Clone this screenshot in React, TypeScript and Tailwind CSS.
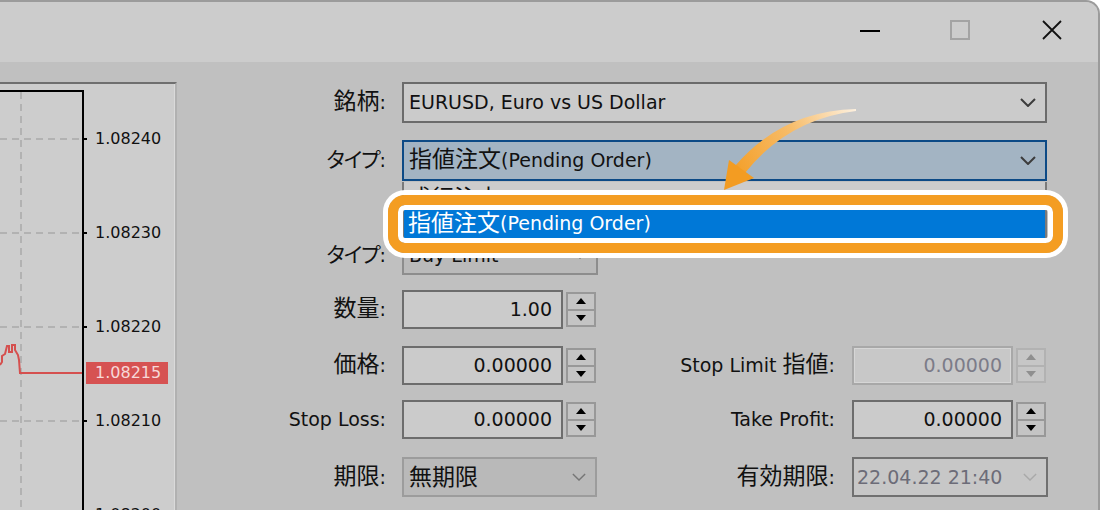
import type { ReactNode } from "react";

// Japanese glyphs are drawn a little larger than the Latin text, as in the terminal UI
function J({ children }: { children: ReactNode }) {
  return <span className="text-[23px] leading-none">{children}</span>;
}

// katakana labels use proportional widths
function K({ children }: { children: ReactNode }) {
  return <span className="text-[21px] leading-none tracking-[-1px] [font-feature-settings:'palt']">{children}</span>;
}

function Chevron({ dim = false, small = false }: { dim?: boolean; small?: boolean }) {
  return (
    <svg width={small ? 14 : 16} height={small ? 8 : 9} viewBox="0 0 16 9" className="shrink-0">
      <path
        d="M1 1 L8 8 L15 1"
        fill="none"
        stroke={dim ? "#a9a9a9" : small ? "#767676" : "#3c3c3c"}
        strokeWidth={small ? 1.6 : 2}
      />
    </svg>
  );
}

function Spin({ disabled = false }: { disabled?: boolean }) {
  const tri = disabled ? "border-b-[#8f8f8f]" : "border-b-black";
  const triDown = disabled ? "border-t-[#8f8f8f]" : "border-t-black";
  return (
    <div
      className={
        disabled
          ? "ml-[3px] flex h-[35px] w-[30px] shrink-0 flex-col border-2 border-[#b2b2b2] bg-[#c6c6c6]"
          : "ml-[3px] flex h-[35px] w-[30px] shrink-0 flex-col border-2 border-[#989898] bg-[#c4c4c4]"
      }
    >
      <div
        className={
          disabled
            ? "flex flex-1 items-center justify-center border-b-2 border-[#b2b2b2]"
            : "flex flex-1 items-center justify-center border-b-2 border-[#989898]"
        }
      >
        <div className={`h-0 w-0 border-x-[5px] border-b-[6px] border-x-transparent ${tri}`} />
      </div>
      <div className="flex flex-1 items-center justify-center">
        <div className={`h-0 w-0 border-x-[5px] border-t-[6px] border-x-transparent ${triDown}`} />
      </div>
    </div>
  );
}

function NumField({ value, disabled = false }: { value: string; disabled?: boolean }) {
  return (
    <div
      className={
        disabled
          ? "flex h-[39px] w-[161px] shrink-0 items-center justify-end border-2 border-[#a8a8a8] bg-[#c8c8c8] pr-[9px] text-[#7c7c88] shadow-[inset_0_0_0_1px_#d6d6d6]"
          : "flex h-[39px] w-[161px] shrink-0 items-center justify-end border-2 border-[#6d6d6d] bg-[#cbcbcb] pr-[9px]"
      }
    >
      {value}
    </div>
  );
}

const gridRows = [55, 149, 243, 337, 431];
const prices = ["1.08240", "1.08230", "1.08220", "1.08210", "1.08200"];

function Chart() {
  return (
    <div className="relative w-[177px] shrink-0 overflow-hidden border-r-2 border-t-2 border-r-[#b1b1b1] border-t-[#6f6f6f] bg-[#cdcdcd] shadow-[inset_-1px_0_0_#dadada]">
      <svg width="175" height="430" className="absolute left-0 top-0">
        <line x1="21" y1="8" x2="21" y2="430" stroke="#b2b2b2" strokeWidth="2" strokeDasharray="7 5" />
        {gridRows.map((y) => (
          <g key={y}>
            <line x1="0" y1={y} x2="82" y2={y} stroke="#b2b2b2" strokeWidth="2" strokeDasharray="7 5" />
            <line x1="84" y1={y} x2="87" y2={y} stroke="#000" strokeWidth="2" />
          </g>
        ))}
        <line x1="0" y1="7" x2="84" y2="7" stroke="#000" strokeWidth="2" />
        <line x1="83" y1="6" x2="83" y2="430" stroke="#000" strokeWidth="2" />
        <path
          d="M0 281 L2 278 L2 272 L5 270 L7 262 L9 262 L9 268 L12 268 L12 261 L15 261 L15 266 L18 271 L19 276 L20 289 L82 289"
          fill="none"
          stroke="#d5504f"
          strokeWidth="2"
        />
      </svg>
      {prices.map((p, i) => (
        <div
          key={p}
          className="absolute left-[95px] h-[20px] text-[16px] leading-[20px] text-[#111]"
          style={{ top: gridRows[i] - 10 }}
        >
          {p}
        </div>
      ))}
      <div className="absolute left-[86px] top-[278px] flex h-[22px] w-[82px] items-center bg-[#d65252] pl-[9px] text-[16px] text-[#f6d8d8]">
        1.08215
      </div>
    </div>
  );
}

function TitleBar() {
  return (
    <div className="flex h-[60px] shrink-0 items-start bg-[#cccccc] pr-[36px]">
      <div className="ml-auto mt-[28px] h-[2px] w-[20px] bg-black" />
      <div className="ml-[70px] mt-[18px] h-[20px] w-[20px] border-2 border-[#a3a3a3]" />
      <svg width="20" height="20" viewBox="0 0 20 20" className="ml-[72px] mt-[18px]">
        <path d="M1 1 L19 19 M19 1 L1 19" stroke="#111" strokeWidth="1.8" />
      </svg>
    </div>
  );
}

function Form() {
  return (
    <div className="flex flex-col">
      <div className="flex h-[41px] items-center">
        <div className="w-[209px] text-right">
          <J>銘柄</J>:
        </div>
        <div className="ml-[16px] flex h-[41px] w-[645px] items-center justify-between border-2 border-[#6b6b6b] bg-[#cbcbcb] pl-[5px] pr-[9px]">
          EURUSD, Euro vs US Dollar
          <Chevron />
        </div>
      </div>

      <div className="mt-[17px] flex h-[41px] items-center">
        <div className="w-[209px] text-right">
          <K>タイプ</K>:
        </div>
        <div className="ml-[16px] flex h-[41px] w-[645px] items-center justify-between border-2 border-[#0c4a86] bg-[#a3b4c3] pl-[5px] pr-[9px]">
          <span>
            <J>指値注文</J>(Pending Order)
          </span>
          <Chevron />
        </div>
      </div>

      <div className="mt-[54px] flex h-[40px] items-center">
        <div className="w-[209px] text-right">
          <K>タイプ</K>:
        </div>
        <div className="ml-[16px] flex h-[40px] w-[196px] items-center justify-between border-2 border-[#8d8d8d] bg-[#bababa] pl-[5px] pr-[9px]">
          Buy Limit
          <Chevron small />
        </div>
      </div>

      <div className="mt-[15px] flex h-[39px] items-center">
        <div className="w-[209px] text-right">
          <J>数量</J>:
        </div>
        <div className="ml-[16px] flex items-center">
          <NumField value="1.00" />
          <Spin />
        </div>
      </div>

      <div className="mt-[17px] flex h-[39px] items-center">
        <div className="w-[209px] text-right">
          <J>価格</J>:
        </div>
        <div className="ml-[16px] flex items-center">
          <NumField value="0.00000" />
          <Spin />
        </div>
        <div className="w-[239px] text-right">
          Stop Limit <J>指値</J>:
        </div>
        <div className="ml-[17px] flex items-center">
          <NumField value="0.00000" disabled />
          <Spin disabled />
        </div>
      </div>

      <div className="mt-[15px] flex h-[39px] items-center">
        <div className="w-[209px] text-right">Stop Loss:</div>
        <div className="ml-[16px] flex items-center">
          <NumField value="0.00000" />
          <Spin />
        </div>
        <div className="w-[239px] text-right">Take Profit:</div>
        <div className="ml-[17px] flex items-center">
          <NumField value="0.00000" />
          <Spin />
        </div>
      </div>

      <div className="mt-[18px] flex h-[40px] items-center">
        <div className="w-[209px] text-right">
          <J>期限</J>:
        </div>
        <div className="ml-[16px] flex h-[40px] w-[195px] items-center justify-between border-2 border-[#9c9c9c] bg-[#b9b9b9] pl-[5px] pr-[9px]">
          <J>無期限</J>
          <Chevron small />
        </div>
        <div className="w-[238px] text-right">
          <J>有効期限</J>:
        </div>
        <div className="ml-[17px] flex h-[40px] w-[196px] items-center justify-between border-2 border-[#707070] bg-[#c7c7c7] pl-[3px] pr-[9px] text-[#6c6c78]">
          22.04.22 21:40
          <Chevron small dim />
        </div>
      </div>
    </div>
  );
}

export default function App() {
  return (
    <div className="relative h-[510px] w-[1100px] overflow-hidden bg-white font-['DejaVu_Sans','Noto_Sans_CJK_JP',sans-serif] text-[19px] text-[#111]">
      <div className="flex h-[510px] w-[1100px] flex-col overflow-hidden rounded-tr-[14px] border-r-2 border-t-2 border-[#9b9b9b] bg-[#c0c0c0]">
        <TitleBar />
        <div className="flex flex-1 pt-[20px]">
          <Chart />
          <Form />
        </div>
      </div>

      {/* open order-type list */}
      <div className="absolute left-[402px] top-[182px] flex h-[68px] w-[645px] flex-col border-x-2 border-[#7a7a7a] bg-[#cccccc]">
        <div className="flex h-[25px] items-center pl-[4px] pt-[8px]">
          <J>成行注文</J>(Instant Execution)
        </div>
        <div className="flex h-[33px] items-center bg-[#0078d7] pl-[4px] text-white">
          <J>指値注文</J>(Pending Order)
        </div>
      </div>

      {/* highlight frame */}
      <div className="absolute left-[388px] top-[195px] h-[58px] w-[675px] rounded-[17px] border-[10px] border-[#f49d22] shadow-[0_0_0_5px_#ffffff,inset_0_0_0_5px_#ffffff]" />

      {/* pointer arrow */}
      <svg width="1100" height="510" className="pointer-events-none absolute left-0 top-0">
        <defs>
          <linearGradient id="arw" x1="856" y1="110" x2="730" y2="180" gradientUnits="userSpaceOnUse">
            <stop offset="0" stopColor="#fdf0de" />
            <stop offset="0.45" stopColor="#f7bd6b" />
            <stop offset="1" stopColor="#f39c22" />
          </linearGradient>
        </defs>
        <path d="M856 109 Q782 111 735 166 L745 173 Q788 119 856 111 Z" fill="url(#arw)" />
        <path d="M724 190 L729 160 L754 178 Z" fill="#f39c22" />
      </svg>
    </div>
  );
}
